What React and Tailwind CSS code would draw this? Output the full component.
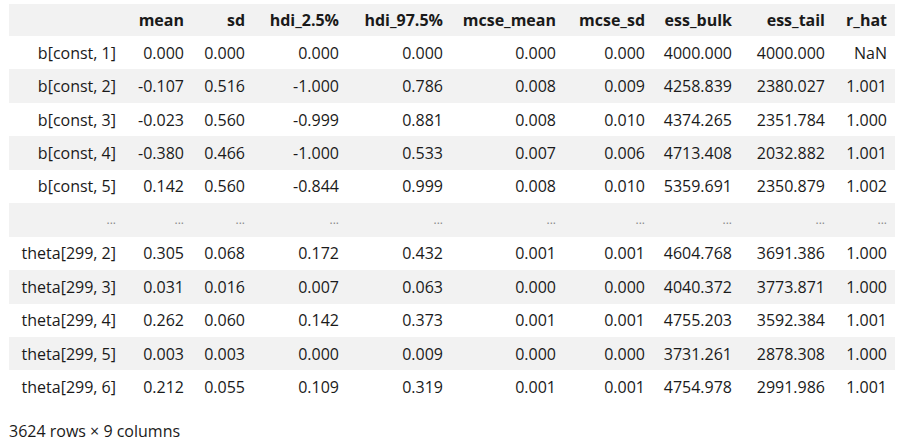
const columns = [
  { name: "", w: "w-[115px]" },
  { name: "mean", w: "w-[68px]" },
  { name: "sd", w: "w-[61px]" },
  { name: "hdi_2.5%", w: "w-[94px]" },
  { name: "hdi_97.5%", w: "w-[104px]" },
  { name: "mcse_mean", w: "w-[113px]" },
  { name: "mcse_sd", w: "w-[89px]" },
  { name: "ess_bulk", w: "w-[87px]" },
  { name: "ess_tail", w: "w-[93px]" },
  { name: "r_hat", w: "w-[62px]" },
];

const rows = [
  ["b[const, 1]", "0.000", "0.000", "0.000", "0.000", "0.000", "0.000", "4000.000", "4000.000", "NaN"],
  ["b[const, 2]", "-0.107", "0.516", "-1.000", "0.786", "0.008", "0.009", "4258.839", "2380.027", "1.001"],
  ["b[const, 3]", "-0.023", "0.560", "-0.999", "0.881", "0.008", "0.010", "4374.265", "2351.784", "1.000"],
  ["b[const, 4]", "-0.380", "0.466", "-1.000", "0.533", "0.007", "0.006", "4713.408", "2032.882", "1.001"],
  ["b[const, 5]", "0.142", "0.560", "-0.844", "0.999", "0.008", "0.010", "5359.691", "2350.879", "1.002"],
  ["...", "...", "...", "...", "...", "...", "...", "...", "...", "..."],
  ["theta[299, 2]", "0.305", "0.068", "0.172", "0.432", "0.001", "0.001", "4604.768", "3691.386", "1.000"],
  ["theta[299, 3]", "0.031", "0.016", "0.007", "0.063", "0.000", "0.000", "4040.372", "3773.871", "1.000"],
  ["theta[299, 4]", "0.262", "0.060", "0.142", "0.373", "0.001", "0.001", "4755.203", "3592.384", "1.001"],
  ["theta[299, 5]", "0.003", "0.003", "0.000", "0.009", "0.000", "0.000", "3731.261", "2878.308", "1.000"],
  ["theta[299, 6]", "0.212", "0.055", "0.109", "0.319", "0.001", "0.001", "4754.978", "2991.986", "1.001"],
];

export default function App() {
  return (
    <div className="bg-white w-[903px] h-[448px] pl-[9px] pt-[4px] text-[16px] text-[#1a1a1a] font-['Segoe_UI','Open_Sans',sans-serif]">
      <table className="table-fixed border-collapse">
        <thead>
          <tr className="bg-[#f2f2f2] h-[32px]">
            {columns.map((c, i) => (
              <th key={i} className={`${c.w} text-right font-bold pr-[8px] whitespace-nowrap`}>
                {c.name}
              </th>
            ))}
          </tr>
        </thead>
        <tbody>
          {rows.map((r, ri) => (
            <tr key={ri} className={`h-[33.45px] ${ri % 2 === 1 ? "bg-[#f2f2f2]" : "bg-white"}`}>
              {r.map((v, ci) => (
                <td
                  key={ci}
                  className={`text-right pr-[8px] whitespace-nowrap ${v === "..." ? "text-[#8a8a8a] text-[12px]" : ""}`}
                >
                  {v}
                </td>
              ))}
            </tr>
          ))}
        </tbody>
      </table>
      <p className="mt-[15px]">3624 rows × 9 columns</p>
    </div>
  );
}
